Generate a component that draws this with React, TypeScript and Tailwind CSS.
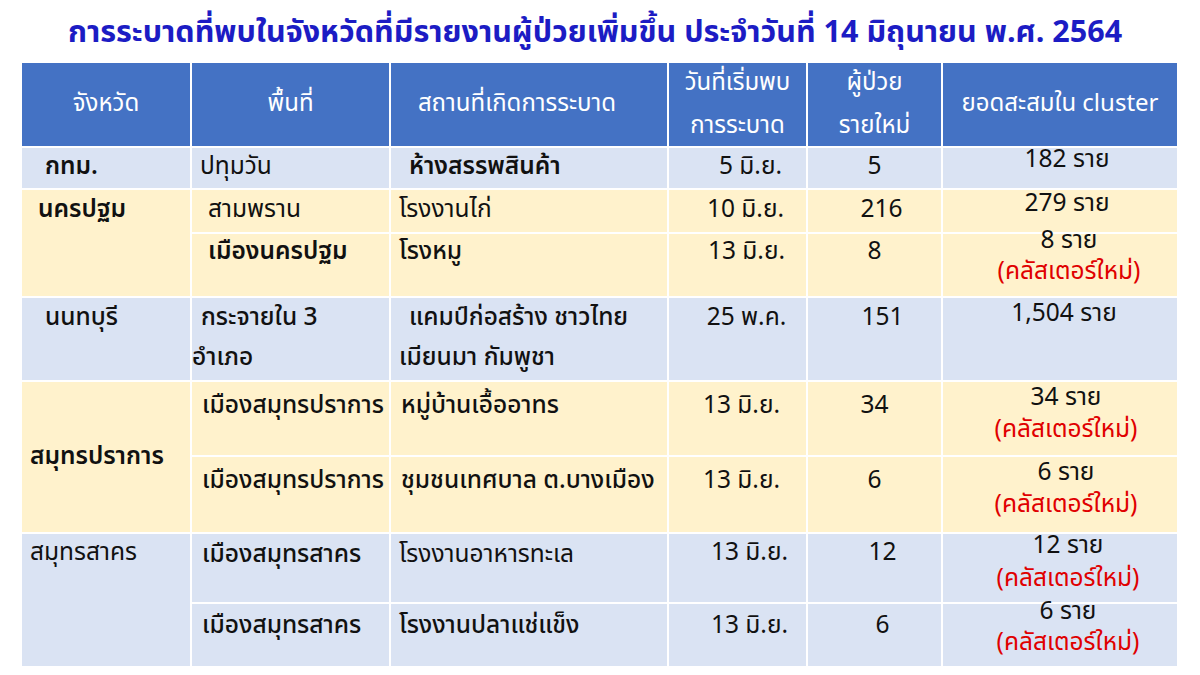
import React from "react";

const F = { fontFamily: "Tahoma, 'Noto Sans Thai', 'Noto Sans', 'DejaVu Sans', sans-serif" };

const Red = () => <div className="text-[#e00000]">(คลัสเตอร์ใหม่)</div>;

export default function App() {
  const blue = "bg-[#dae3f3]";
  const yel = "bg-[#fff2cc]";
  const hd = "bg-[#4472c4] text-white flex items-center justify-center text-center text-[24px] leading-[43px]";
  return (
    <div className="w-[1200px] h-[675px] bg-white overflow-hidden" style={F}>
      <h1 className="text-center text-[30.5px] font-bold text-[#1c1cc4] pt-[13px] h-[63px] leading-[40px] pr-[10px]">
        การระบาดที่พบในจังหวัดที่มีรายงานผู้ป่วยเพิ่มขึ้น ประจำวันที่ 14 มิถุนายน พ.ศ. 2564
      </h1>
      <div
        className="ml-[22px] grid gap-[2px] text-[24.5px] text-[#111] leading-[32px]"
        style={{
          width: 1155,
          gridTemplateColumns: "168px 197px 276px 137px 133px 234px",
          gridTemplateRows: "83px 40px 42px 62px 82px 73px 75px 68px 62px",
        }}
      >
        <div className={hd}>จังหวัด</div>
        <div className={hd}>พื้นที่</div>
        <div className={`${hd} pr-[24px]`}>สถานที่เกิดการระบาด</div>
        <div className={hd}><div>วันที่เริ่มพบ<br />การระบาด</div></div>
        <div className={hd}><div>ผู้ป่วย<br />รายใหม่</div></div>
        <div className={hd}>ยอดสะสมใน cluster</div>

        {/* กทม */}
        <div className={`${blue} pl-[23px] pt-[3px] font-semibold`}>กทม.</div>
        <div className={`${blue} pl-[8px] pt-[3px]`}>ปทุมวัน</div>
        <div className={`${blue} pl-[18px] pt-[3px] font-semibold`}>ห้างสรรพสินค้า</div>
        <div className={`${blue} text-center pt-[3px] pl-[26px]`}>5 มิ.ย.</div>
        <div className={`${blue} text-center pt-[3px]`}>5</div>
        <div className={`${blue} text-center leading-[24px] pl-[14px]`}>182 ราย</div>

        {/* นครปฐม */}
        <div className={`${yel} row-span-2 pl-[16px] pt-[4px] font-semibold`}>นครปฐม</div>
        <div className={`${yel} pl-[16px] pt-[4px]`}>สามพราน</div>
        <div className={`${yel} pl-[8px] pt-[4px]`}>โรงงานไก่</div>
        <div className={`${yel} text-center pt-[4px] pl-[16px]`}>10 มิ.ย.</div>
        <div className={`${yel} text-center pt-[4px] pl-[14px]`}>216</div>
        <div className={`${yel} text-center leading-[24px] pt-[2px] pl-[14px]`}>279 ราย</div>

        <div className={`${yel} pl-[16px] pt-[2px] font-semibold`}>เมืองนครปฐม</div>
        <div className={`${yel} pl-[8px] pt-[2px] font-medium`}>โรงหมู</div>
        <div className={`${yel} text-center pt-[2px] pl-[18px]`}>13 มิ.ย.</div>
        <div className={`${yel} text-center pt-[2px]`}>8</div>
        <div className={`${yel} text-center pl-[18px]`}><div className="-mt-[9px] leading-[31px]">8 ราย<Red /></div></div>

        {/* นนทบุรี */}
        <div className={`${blue} pl-[23px] pt-[4px] font-medium`}>นนทบุรี</div>
        <div className={`${blue} leading-[40px] font-medium`}><div className="pl-[9px]">กระจายใน 3</div><div>อำเภอ</div></div>
        <div className={`${blue} leading-[40px] pl-[8px] font-medium`}><div className="pl-[10px]">แคมป์ก่อสร้าง ชาวไทย</div><div>เมียนมา กัมพูชา</div></div>
        <div className={`${blue} text-center pt-[4px] pl-[18px]`}>25 พ.ค.</div>
        <div className={`${blue} text-center pt-[4px] pl-[16px]`}>151</div>
        <div className={`${blue} text-center leading-[24px] pt-[4px] pl-[8px]`}>1,504 ราย</div>

        {/* สมุทรปราการ */}
        <div className={`${yel} row-span-2 pl-[8px] flex items-center font-semibold`}>สมุทรปราการ</div>
        <div className={`${yel} pl-[10px] pt-[8px] font-medium`}>เมืองสมุทรปราการ</div>
        <div className={`${yel} pl-[10px] pt-[8px] font-medium`}>หมู่บ้านเอื้ออาทร</div>
        <div className={`${yel} text-center pt-[8px] pl-[8px]`}>13 มิ.ย.</div>
        <div className={`${yel} text-center pt-[8px]`}>34</div>
        <div className={`${yel} text-center leading-[32px] pl-[12px]`}>34 ราย<Red /></div>

        <div className={`${yel} pl-[10px] pt-[8px] font-medium`}>เมืองสมุทรปราการ</div>
        <div className={`${yel} pl-[10px] pt-[8px] font-medium`}>ชุมชนเทศบาล ต.บางเมือง</div>
        <div className={`${yel} text-center pt-[8px] pl-[8px]`}>13 มิ.ย.</div>
        <div className={`${yel} text-center pt-[8px]`}>6</div>
        <div className={`${yel} text-center leading-[32px] pl-[12px]`}>6 ราย<Red /></div>

        {/* สมุทรสาคร */}
        <div className={`${blue} row-span-2 pl-[8px] pt-[3px]`}>สมุทรสาคร</div>
        <div className={`${blue} pl-[10px] pt-[5px] font-medium`}>เมืองสมุทรสาคร</div>
        <div className={`${blue} pl-[8px] pt-[5px]`}>โรงงานอาหารทะเล</div>
        <div className={`${blue} text-center pt-[3px] pl-[24px]`}>13 มิ.ย.</div>
        <div className={`${blue} text-center pt-[3px] pl-[16px]`}>12</div>
        <div className={`${blue} text-center pl-[16px]`}><div className="-mt-[5px] leading-[33px]">12 ราย<Red /></div></div>

        <div className={`${blue} pl-[10px] pt-[6px] font-medium`}>เมืองสมุทรสาคร</div>
        <div className={`${blue} pl-[8px] pt-[6px] font-medium`}>โรงงานปลาแช่แข็ง</div>
        <div className={`${blue} text-center pt-[6px] pl-[24px]`}>13 มิ.ย.</div>
        <div className={`${blue} text-center pt-[6px] pl-[16px]`}>6</div>
        <div className={`${blue} text-center pl-[16px]`}><div className="-mt-[8px] leading-[31px]">6 ราย<Red /></div></div>
      </div>
    </div>
  );
}
